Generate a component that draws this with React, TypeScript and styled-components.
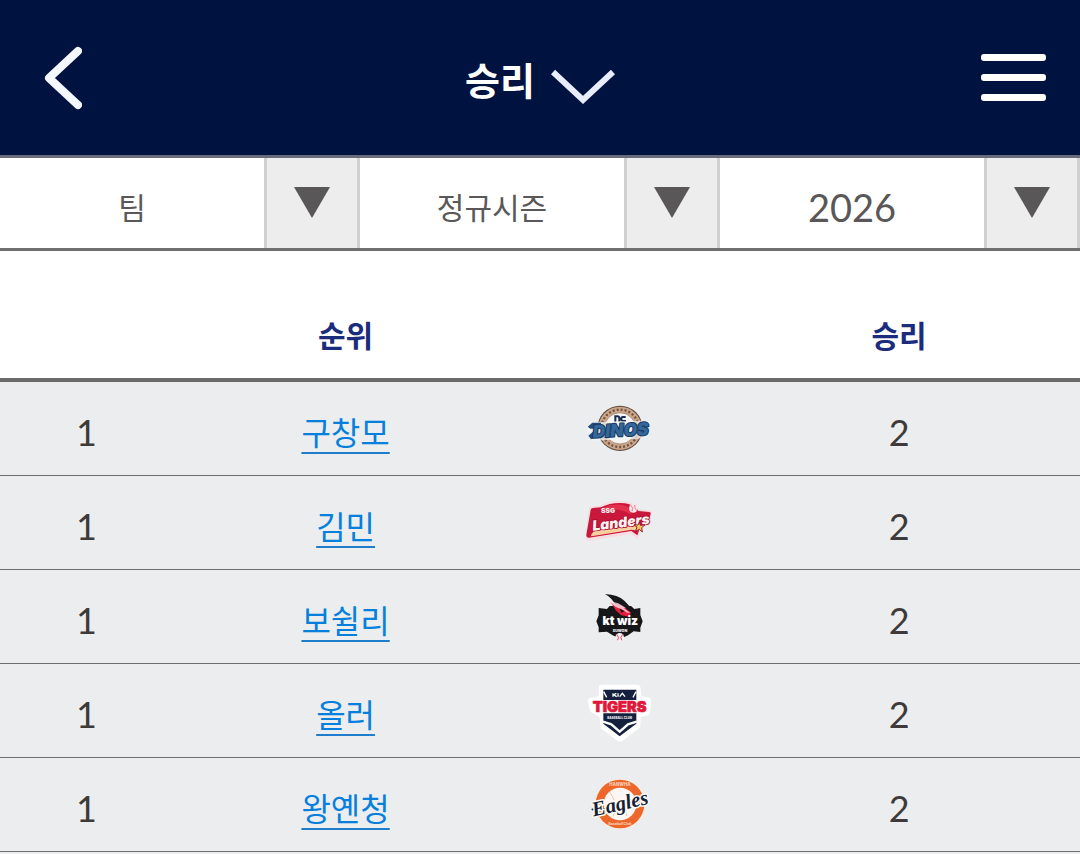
import React from "react";
import styled, { createGlobalStyle } from "styled-components";

const GlobalStyle = createGlobalStyle`
  * { box-sizing: border-box; }
  body {
    margin: 0;
    background: #fff;
    font-family: Lato, "Noto Sans CJK KR", sans-serif;
  }
`;

const Page = styled.div`
  min-height: 100vh;
  display: flex;
  flex-direction: column;
  background: #ebedee;
`;

const TopBar = styled.header`
  display: grid;
  grid-template-columns: 1fr auto 1fr;
  align-items: center;
  height: 158px;
  padding: 0 34px;
  background: #00123f;
  border-bottom: 3px solid #6a6c7e;
`;

const IconButton = styled.button<{ $end?: boolean }>`
  display: flex;
  justify-self: ${(p) => (p.$end ? "end" : "start")};
  padding: ${(p) => (p.$end ? "0" : "0 10px")};
  border: 0;
  background: none;
  cursor: pointer;
`;

const Heading = styled.h1`
  margin: 0;
  font-size: 38px;
  line-height: 48px;
`;

const TitleButton = styled.button`
  display: flex;
  align-items: center;
  gap: 16px;
  padding: 4px 0 0;
  border: 0;
  background: none;
  color: #fff;
  font: inherit;
  cursor: pointer;

  svg {
    margin-top: 14px;
  }
`;

const Filters = styled.form`
  display: grid;
  grid-template-columns: repeat(3, 1fr);
  height: 93px;
  background: #fff;
  border-bottom: 3px solid #6f6e6e;
`;

const FilterField = styled.label`
  display: grid;
  grid-template-columns: minmax(0, 1fr) 96px;
`;

const FilterSelect = styled.select`
  appearance: none;
  grid-area: 1 / 1 / 2 / 3;
  width: 100%;
  padding: 8px 96px 0 0;
  border: 0;
  border-radius: 0;
  background: transparent;
  color: #595757;
  font-family: inherit;
  font-size: 38px;
  text-align: center;
  text-align-last: center;
  cursor: pointer;

  &:lang(ko) {
    font-size: 30px;
  }
`;

const FilterArrow = styled.span`
  grid-area: 1 / 2;
  display: flex;
  justify-content: center;
  padding-top: 29px;
  background: #ededed;
  border: solid #d0d0d0;
  border-width: 0 3px;
  pointer-events: none;
`;

const Ranking = styled.table`
  width: 100%;
  table-layout: fixed;
  border-collapse: separate;
  border-spacing: 0;
  text-align: center;
`;

const Col = styled.col<{ $share: number }>`
  width: ${(p) => p.$share}%;
`;

const HeadCell = styled.th`
  height: 131px;
  padding: 0 0 20px;
  vertical-align: bottom;
  background: #fff;
  border-bottom: 4px solid #6b6a6a;
  color: #1a2c7b;
  font-size: 30px;
  line-height: 46px;
`;

const Cell = styled.td<{ $picture?: boolean }>`
  height: 94px;
  padding: ${(p) => (p.$picture ? "0" : "6px 0 0")};
  vertical-align: middle;
  border-bottom: 1px solid #6f6e70;
  color: #3e3a39;
  font-size: 36px;
  line-height: 48px;

  svg {
    display: block;
    margin: 0 auto;
  }
`;

const PlayerLink = styled.a`
  color: #0680dc;
  font-size: 32px;
  text-decoration: underline 2px #1f7ecb;
  text-underline-offset: 7px;
  text-decoration-skip-ink: none;
`;

const LogoText = styled.text<{ $serif?: boolean }>`
  font-family: ${(p) => (p.$serif ? '"Liberation Serif", serif' : "Inter, sans-serif")};
  font-weight: 900;
  text-anchor: middle;
  paint-order: stroke;
  stroke-linejoin: round;
`;

function Logo({ label, top, children }: { label: string; top: number; children: React.ReactNode }) {
  return (
    <svg width="95" height="65" viewBox={`0 ${top} 285 195`} role="img" aria-label={label}>
      {children}
    </svg>
  );
}

const Dinos = () => (
  <Logo label="NC Dinos" top={3}>
    <circle cx="147" cy="100" r="68" fill="#59483f" />
    <circle cx="147" cy="100" r="65" fill="#cda586" />
    <circle cx="147" cy="100" r="56" fill="none" stroke="#6b5446" strokeWidth="7" strokeDasharray="6 6" />
    <circle cx="147" cy="100" r="47" fill="#f6f4f2" stroke="#8a6c58" strokeWidth="2" />
    <path d="M133 80V64h6q6 0 6 6v10M164 66h-8q-5 0-5 5v2q0 5 5 5h9" fill="none" stroke="#142c50" strokeWidth="6" />
    <path d="M47 94l14-12 180-6-6 17 4 14-8 20-30 4-133 6-18-4 8-15-9-7z" fill="#f2f4f7" opacity=".7" />
    <path d="M50 95l14-12h26v18H58zM52 122l20-17 8 20-20 8z" fill="#244d7d" />
    <LogoText x="149" y="124" fontSize="52" fontStyle="italic" fill="#356799" stroke="#173a64" strokeWidth="6" transform="rotate(-3 149 105)">
      DINOS
    </LogoText>
  </Logo>
);

const Landers = () => (
  <Logo label="SSG Landers" top={0}>
    <path d="M54 56q1-7 9-7l24-2q36-19 76-13 32 5 42 24l32 3q8 2 6 9l-7 27-25 23-10 29-20-16-126 19q-14 0-11-13z" fill="#f7dde1" />
    <path d="M59 60q1-6 7-6l23-2q36-17 73-12 30 5 40 23l33 3q5 1 4 7l-7 21-25 20-8 22-18-13-127 20q-9 0-8-9z" fill="#c9183b" />
    <path d="M96 53q54-23 92 8l-10 12q-34-22-82-10z" fill="#e5304b" />
    <path d="M60 135l9-13 130-16-3 8 16-2-12 10-18-3-121 20z" fill="#f8cf9e" />
    <circle cx="187" cy="55" r="13" fill="#f9e6e8" />
    <path d="M180 46q8 8 3 18M191 45q-1 10 6 17" fill="none" stroke="#d64c60" strokeWidth="2" />
    <LogoText x="111" y="70" fontSize="20" fill="#fff1f2">SSG</LogoText>
    <LogoText x="150" y="112" fontSize="42" fontStyle="italic" fill="#fff2f3" stroke="#a50d2c" strokeWidth="5" transform="rotate(-7 150 98)">
      Landers
    </LogoText>
    <path d="M205 96l3 10 14-2-10 9 2 13-9-8-12 6 5-12-9-8 12 1z" fill="#f7c85d" stroke="#8f2230" strokeWidth="3" />
  </Logo>
);

const KtWiz = () => (
  <Logo label="kt wiz suwon" top={-3}>
    <path d="M83 69l25 3 8-9h64l10 9 18-3v21l7 19-7 19v13l-20-2-17 12-23 10-23-10-17-11-25 2v-15l-7-18 7-18z" fill="#17171a" />
    <path d="M102 27q39 2 58 20l24 26-1 22-30-4-20-17-9-15 10 3q-10-23-32-35z" fill="#17171a" />
    <path d="M116 50l38 12 25 20-2 14-26-5-17-15-8-15z" fill="#e71d3c" />
    <path d="M112 47l30 8 24 15-8-1 20 16-22-5-17-9z" fill="#fff" opacity=".7" />
    <path d="M126 62l36 16 8 12-20-4-14-12z" fill="#e71d3c" />
    <path d="M145 70l15 8-8 6z" fill="#17171a" />
    <circle cx="146" cy="157" r="13" fill="#fbf1f1" />
    <path d="M137 148q9 9 3 18M155 148q-9 9-3 18" fill="none" stroke="#dc4961" strokeWidth="3" />
    <LogoText x="148" y="120" fontSize="36" fill="#fff">kt wiz</LogoText>
    <LogoText x="147" y="140" fontSize="11" fill="#f2f2f2">SUWON</LogoText>
  </Logo>
);

const Tigers = () => (
  <Logo label="KIA Tigers baseball club" top={0}>
    <path d="M84 25q2-5 12-5h100q10 0 12 6l3 27 26 7q8 18-3 50l-25 8-1 30-53 40q-8 6-16 0l-51-38-2-34-26-13q-11-21-8-41l31-8z" fill="#fff" />
    <path d="M97 35h99v102l-50 38-49-38z" fill="#14203e" />
    <path d="M107 58l-9-17M186 58l9-17" stroke="#fff" strokeWidth="4" />
    <path d="M96 131l25 8 25 22 25-22 26-8" fill="none" stroke="#fff" strokeWidth="7" />
    <path d="M126 56V46M127 51l9-5M129 51l8 5M141 56V46M146 56l8-10 8 10" fill="none" stroke="#fff" strokeWidth="4" />
    <path d="M58 66h176v40H72z" fill="#fff" />
    <LogoText x="146" y="103" fontSize="44" fill="#df1738" stroke="#df1738" strokeWidth="2">TIGERS</LogoText>
    <LogoText x="146" y="124" fontSize="9" fill="#e4e6eb">BASEBALL CLUB</LogoText>
  </Logo>
);

const Eagles = () => (
  <Logo label="Eagles baseball club" top={6}>
    <circle cx="147" cy="102" r="76" fill="#f7ede7" />
    <circle cx="147" cy="102" r="73" fill="#ee672a" />
    <circle cx="147" cy="102" r="49" fill="#fcf7f4" />
    <path d="M116 67q27 34 10 73M177 66q-23 34-9 73" fill="none" stroke="#ef9d79" strokeWidth="3" strokeDasharray="4 3" />
    <LogoText x="147" y="47" fontSize="13" fill="#f9c5ac">HANWHA</LogoText>
    <LogoText x="147" y="164" fontSize="10" fill="#f9c5ac">Baseball Club</LogoText>
    <path d="M64 118q22 6 42-3" fill="none" stroke="#151f35" strokeWidth="5" strokeLinecap="round" />
    <LogoText $serif x="147" y="121" fontSize="62" fontStyle="italic" fill="#151f35" stroke="#fffaf6" strokeWidth="9" transform="rotate(-13 147 102)">
      Eagles
    </LogoText>
  </Logo>
);

const filters = [
  { name: "팀", options: ["팀"], lang: "ko" },
  { name: "시즌 구분", options: ["정규시즌"], lang: "ko" },
  { name: "연도", options: ["2026"], lang: "en" },
];

const players = [
  { rank: 1, name: "구창모", Team: Dinos, wins: 2 },
  { rank: 1, name: "김민", Team: Landers, wins: 2 },
  { rank: 1, name: "보쉴리", Team: KtWiz, wins: 2 },
  { rank: 1, name: "올러", Team: Tigers, wins: 2 },
  { rank: 1, name: "왕옌청", Team: Eagles, wins: 2 },
];

export default function App() {
  return (
    <Page lang="ko">
      <GlobalStyle />
      <TopBar>
        <IconButton type="button" aria-label="뒤로">
          <svg width="38" height="64" viewBox="0 0 38 64" fill="none" stroke="#f5f7ff" strokeWidth="8" strokeLinecap="round" strokeLinejoin="round">
            <path d="M34 5L5 32l29 27" />
          </svg>
        </IconButton>
        <Heading>
          <TitleButton type="button">
            승리
            <svg width="64" height="36" viewBox="0 0 64 36" fill="none" stroke="#e8ecfb" strokeWidth="6">
              <path d="M2 3l30 28L62 3" />
            </svg>
          </TitleButton>
        </Heading>
        <IconButton type="button" aria-label="메뉴" $end>
          <svg width="65" height="48" viewBox="0 0 65 48" fill="#fff">
            <rect y="0" width="65" height="7" rx="3" />
            <rect y="20" width="65" height="7" rx="3" />
            <rect y="40" width="65" height="7" rx="3" />
          </svg>
        </IconButton>
      </TopBar>

      <Filters>
        {filters.map((f) => (
          <FilterField key={f.name}>
            <FilterSelect aria-label={f.name} lang={f.lang}>
              {f.options.map((o) => (
                <option key={o}>{o}</option>
              ))}
            </FilterSelect>
            <FilterArrow>
              <svg width="36" height="31" viewBox="0 0 36 31" fill="#595757">
                <path d="M0 0h36L18 31z" />
              </svg>
            </FilterArrow>
          </FilterField>
        ))}
      </Filters>

      <Ranking>
        <colgroup>
          <Col $share={16} />
          <Col $share={32} />
          <Col $share={18.5} />
          <Col $share={33.5} />
        </colgroup>
        <thead>
          <tr>
            <HeadCell />
            <HeadCell scope="col">순위</HeadCell>
            <HeadCell />
            <HeadCell scope="col">승리</HeadCell>
          </tr>
        </thead>
        <tbody>
          {players.map(({ rank, name, Team, wins }) => (
            <tr key={name}>
              <Cell>{rank}</Cell>
              <Cell>
                <PlayerLink href="#">{name}</PlayerLink>
              </Cell>
              <Cell $picture>
                <Team />
              </Cell>
              <Cell>{wins}</Cell>
            </tr>
          ))}
        </tbody>
      </Ranking>
    </Page>
  );
}
